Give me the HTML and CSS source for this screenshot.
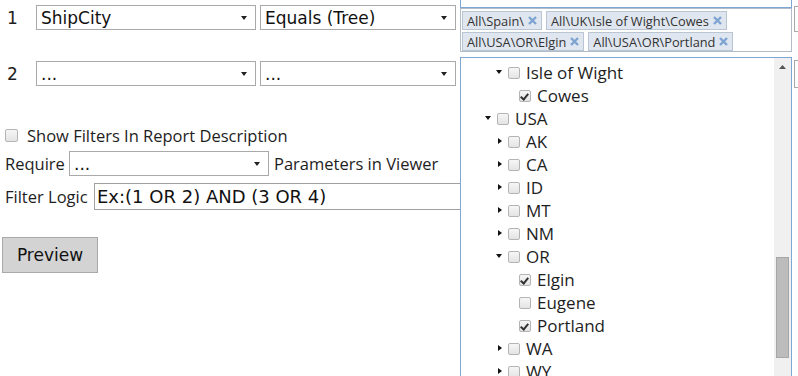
FILE: index.html
```html
<!DOCTYPE html>
<html lang="en">
<head>
    <meta charset="UTF-8">
    <title>Report Filters</title>
    <link rel="stylesheet" href="styles.css">
</head>
<body>
<div class="page">
    <div class="left">
        <div class="filter-row first">
            <span class="num">1</span>
            <div class="select sel-field"><span>ShipCity</span><svg class="caret" width="6" height="4" viewBox="0 0 6 4"><path d="M0 0H6L3 4Z"/></svg></div>
            <div class="select sel-op"><span>Equals (Tree)</span><svg class="caret" width="6" height="4" viewBox="0 0 6 4"><path d="M0 0H6L3 4Z"/></svg></div>
        </div>
        <div class="filter-row second">
            <span class="num">2</span>
            <div class="select sel-field"><span>...</span><svg class="caret" width="6" height="4" viewBox="0 0 6 4"><path d="M0 0H6L3 4Z"/></svg></div>
            <div class="select sel-op"><span>...</span><svg class="caret" width="6" height="4" viewBox="0 0 6 4"><path d="M0 0H6L3 4Z"/></svg></div>
        </div>

        <label class="check-row"><span class="box big"></span>Show Filters In Report Description</label>

        <div class="require-row">
            <span class="req-label">Require</span>
            <div class="select sel-require"><span>...</span><svg class="caret" width="6" height="4" viewBox="0 0 6 4"><path d="M0 0H6L3 4Z"/></svg></div>
            <span>Parameters in Viewer</span>
        </div>

        <div class="logic-row">
            <span class="logic-label">Filter Logic</span>
            <div class="text-input">Ex:(1 OR 2) AND (3 OR 4)</div>
        </div>

        <button class="preview">Preview</button>
    </div>

    <div class="right">
        <div class="value-top"></div>
        <div class="tags">
            <span class="tag">All\Spain\<svg class="x" width="9" height="9" viewBox="0 0 9 9"><path d="M1 1L8 8M8 1L1 8"/></svg></span>
            <span class="tag">All\UK\Isle of Wight\Cowes<svg class="x" width="9" height="9" viewBox="0 0 9 9"><path d="M1 1L8 8M8 1L1 8"/></svg></span>
            <span class="tag">All\USA\OR\Elgin<svg class="x" width="9" height="9" viewBox="0 0 9 9"><path d="M1 1L8 8M8 1L1 8"/></svg></span>
            <span class="tag">All\USA\OR\Portland<svg class="x" width="9" height="9" viewBox="0 0 9 9"><path d="M1 1L8 8M8 1L1 8"/></svg></span>
        </div>
        <div class="tree">
            <div class="tree-list">
                <div class="node lv2"><span class="tw down"></span><span class="box"></span>Isle of Wight</div>
                <div class="node lv3"><span class="tw"></span><span class="box on"></span>Cowes</div>
                <div class="node lv1"><span class="tw down"></span><span class="box"></span>USA</div>
                <div class="node lv2"><span class="tw closed"></span><span class="box"></span>AK</div>
                <div class="node lv2"><span class="tw closed"></span><span class="box"></span>CA</div>
                <div class="node lv2"><span class="tw closed"></span><span class="box"></span>ID</div>
                <div class="node lv2"><span class="tw closed"></span><span class="box"></span>MT</div>
                <div class="node lv2"><span class="tw closed"></span><span class="box"></span>NM</div>
                <div class="node lv2"><span class="tw down"></span><span class="box"></span>OR</div>
                <div class="node lv3"><span class="tw"></span><span class="box on"></span>Elgin</div>
                <div class="node lv3"><span class="tw"></span><span class="box"></span>Eugene</div>
                <div class="node lv3"><span class="tw"></span><span class="box on"></span>Portland</div>
                <div class="node lv2"><span class="tw closed"></span><span class="box"></span>WA</div>
                <div class="node lv2"><span class="tw closed"></span><span class="box"></span>WY</div>
            </div>
            <div class="scrollbar">
                <svg class="up" width="7" height="4" viewBox="0 0 7 4"><path d="M0 4H7L3.5 0Z"/></svg>
                <div class="thumb"></div>
            </div>
        </div>
    </div>

    <div class="edge">
        <div class="edge-box one"></div>
        <div class="edge-box two"></div>
    </div>
</div>
</body>
</html>
```

FILE: styles.css
```css
body {
    margin: 0;
    padding: 0;
    background: #fff;
    font-family: "Open Sans", Arial, sans-serif;
    font-size: 16.5px;
    color: #1e1e1e;
    overflow: hidden;
    height: 376px;
}
.page {
    display: flex;
    align-items: flex-start;
}
.left {
    width: 460px;
    flex: 0 0 460px;
}

/* filter rows */
.filter-row {
    display: flex;
    align-items: center;
    height: 25px;
    padding-left: 7px;
}
.filter-row.first { margin-top: 5px; }
.filter-row.second { margin-top: 31px; }
.num {
    width: 29px;
    font-family: "DejaVu Sans", Verdana, sans-serif;
    font-size: 17px;
}
.select {
    display: flex;
    align-items: center;
    justify-content: space-between;
    height: 25px;
    box-sizing: border-box;
    border: 1px solid #a9a9a9;
    background: #fff;
    padding-left: 4px;
    font-family: "DejaVu Sans", Verdana, sans-serif;
    font-size: 17px;
    color: #111;
}
.caret {
    margin-right: 8px;
    fill: #222;
}
.sel-field { width: 220px; }
.sel-op { width: 196px; margin-left: 4px; }
.sel-require { width: 200px; margin: 0 5px 0 0; }
.req-label { width: 64px; }

.check-row {
    display: flex;
    align-items: center;
    height: 20px;
    margin-top: 39px;
    padding-left: 5px;
}
.box {
    display: inline-block;
    width: 12px;
    height: 12px;
    box-sizing: border-box;
    border: 1px solid #b4b4b4;
    border-radius: 2px;
    background: linear-gradient(#f6f6f6, #e4e4e4);
    flex: 0 0 auto;
    position: relative;
}
.box.big {
    width: 13px;
    height: 13px;
    margin-right: 9px;
}
.box.on::after {
    content: "";
    position: absolute;
    left: 2px;
    top: 1px;
    width: 3px;
    height: 6px;
    border: solid #333;
    border-width: 0 2px 2px 0;
    transform: rotate(40deg);
}

.require-row {
    display: flex;
    align-items: center;
    height: 25px;
    margin-top: 6px;
    padding-left: 5px;
}
.logic-row {
    display: flex;
    align-items: center;
    height: 27px;
    margin-top: 7px;
    padding-left: 5px;
}
.logic-label { width: 89px; }
.text-input {
    flex: 1;
    height: 27px;
    box-sizing: border-box;
    border: 1px solid #a0a0a0;
    border-right: none;
    padding-left: 2px;
    font-family: "DejaVu Sans", Verdana, sans-serif;
    font-size: 18px;
    line-height: 25px;
    color: #111;
    white-space: nowrap;
    overflow: hidden;
}
.preview {
    display: block;
    margin: 27px 0 0 2px;
    width: 96px;
    height: 36px;
    background: #d3d3d3;
    border: 1px solid #a9a9a9;
    font-family: "DejaVu Sans", Verdana, sans-serif;
    font-size: 17px;
    color: #111;
    padding: 0;
}

/* value picker */
.right {
    width: 332px;
    flex: 0 0 332px;
}
.value-top {
    height: 8px;
    box-sizing: border-box;
    border: 1px solid #7fa7d6;
    border-top: none;
}
.tags {
    height: 44px;
    box-sizing: border-box;
    border: 1px solid #b3bdca;
    padding: 2px 1px 0;
    display: flex;
    flex-wrap: wrap;
    align-content: flex-start;
    gap: 2px 4px;
}
.tag {
    display: flex;
    align-items: center;
    height: 19px;
    box-sizing: border-box;
    padding: 0 4px;
    background: #dfe6ef;
    border: 1px solid #bac5d4;
    font-size: 12.8px;
    color: #333;
    white-space: nowrap;
}
.x {
    margin-left: 4px;
    stroke: #7ea3d2;
    stroke-width: 2.4;
}
.tree {
    display: flex;
    height: 330px;
    margin-top: 5px;
    box-sizing: border-box;
    border: 1px solid #7fa7d6;
    border-bottom: none;
}
.tree-list {
    flex: 1;
    padding-top: 3px;
    font-size: 17px;
}
.node {
    display: flex;
    align-items: center;
    height: 23px;
    white-space: nowrap;
}
.node.lv1 { padding-left: 23px; }
.node.lv2 { padding-left: 34px; }
.node.lv3 { padding-left: 45px; }
.tw {
    width: 9px;
    height: 7px;
    margin-right: 4px;
    flex: 0 0 auto;
    position: relative;
}
.tw.down::before {
    content: "";
    position: absolute;
    left: 1px;
    top: 1px;
    border-left: 3.5px solid transparent;
    border-right: 3.5px solid transparent;
    border-top: 4px solid #111;
}
.tw.closed::before {
    content: "";
    position: absolute;
    left: 3px;
    top: 0;
    border-top: 3.5px solid transparent;
    border-bottom: 3.5px solid transparent;
    border-left: 4px solid #111;
}
.node .box {
    margin-right: 6px;
}
.scrollbar {
    width: 17px;
    flex: 0 0 17px;
    background: #f0f0f0;
    padding-top: 7px;
    box-sizing: border-box;
    display: flex;
    flex-direction: column;
    align-items: center;
}
.up { fill: #555; }
.thumb {
    width: 13px;
    height: 101px;
    margin-top: 188px;
    box-sizing: border-box;
    background: #bcbcbc;
    border: 1px solid #a6a6a6;
}

.edge {
    margin-left: 2px;
    width: 6px;
}
.edge-box {
    box-sizing: border-box;
    border: 1px solid #a9a9a9;
    border-right: none;
}
.edge-box.one { margin-top: 6px; height: 26px; }
.edge-box.two { margin-top: 28px; height: 28px; }
```
